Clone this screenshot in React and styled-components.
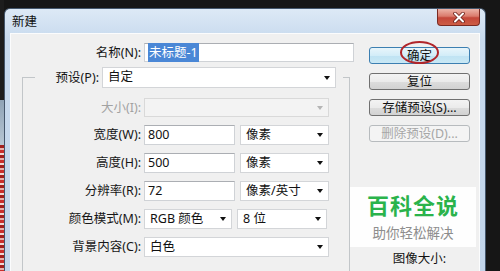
import React from "react";
import styled, { createGlobalStyle } from "styled-components";

const Global = createGlobalStyle`
  html, body { margin: 0; padding: 0; background: #161616; }
  body { font-family: "Noto Sans", "Noto Sans CJK SC", sans-serif; }
  * { box-sizing: border-box; }
`;

const Desktop = styled.div`
  display: flex;
  width: 500px;
  height: 271px;
  overflow: hidden;
  background: #161616;
`;

const Wallpaper = styled.div`
  width: 4px;
  flex: none;
  background:
    linear-gradient(to bottom, #1d1d1d 0, #1d1d1d 100px, #8fa3b6 100px, #b7c6d3 145px, transparent 145px),
    repeating-linear-gradient(to bottom, #c9302c 0 3px, #f0d8d4 3px 5px, #a3201d 5px 8px, #e8b3ad 8px 10px);
`;

const Window = styled.div`
  flex: none;
  width: 482px;
  margin-top: 8px;
  display: flex;
  flex-direction: column;
  border: 1px solid #44566b;
  border-bottom: none;
  border-radius: 6px 6px 0 0;
  background: linear-gradient(to bottom, #dde9f6 0, #c8daee 30px, #c2d5ea 100%);
`;

const TitleBar = styled.div`
  height: 24px;
  flex: none;
  display: flex;
  justify-content: space-between;
  align-items: flex-start;
  padding: 0 5px 0 7px;
`;

const Title = styled.span`
  font-size: 12.5px;
  line-height: 25px;
  color: #111;
`;

const CloseButton = styled.button`
  width: 43px;
  height: 17px;
  padding: 0;
  border: 1px solid #7a2a22;
  border-top: none;
  border-radius: 0 0 4px 4px;
  background: linear-gradient(to bottom, #ecb4a8 0%, #da7b6c 45%, #c4473a 55%, #cd5d45 100%);
  display: flex;
  align-items: center;
  justify-content: center;
`;

const Frame = styled.div`
  flex: 1;
  padding: 0 5px;
  display: flex;
`;

const Panel = styled.div`
  position: relative;
  flex: 1;
  display: flex;
  padding: 9px 0 0 11px;
  background: #f0f0f0;
  border: 1px solid #fbfcfd;
  border-bottom: none;
`;

const LeftCol = styled.div`
  width: 332px;
  flex: none;
  display: flex;
  flex-direction: column;
`;

const Row = styled.div`
  display: flex;
  align-items: center;
  gap: 3px;
  height: ${(p) => p.$h || 20}px;
`;

const Label = styled.span`
  width: ${(p) => p.$w}px;
  flex: none;
  text-align: right;
  font-size: 12.5px;
  line-height: 16px;
  white-space: nowrap;
  color: ${(p) => (p.$disabled ? "#a2a2a2" : "#161616")};
`;

const Controls = styled.div`
  display: flex;
  gap: 5px;
  height: 100%;
`;

const TextBox = styled.div`
  width: ${(p) => p.$w}px;
  height: 100%;
  background: #fff;
  border: 1px solid #cfd2d6;
  border-top-color: #abaeb3;
  padding-left: 3px;
  font-size: 12.5px;
  line-height: 18px;
  color: #111;
  white-space: nowrap;
`;

const Selected = styled.span`
  background: #4a87d6;
  color: #fff;
  padding: 1px 1px;
`;

const Select = styled.div`
  position: relative;
  width: ${(p) => p.$w}px;
  height: 100%;
  background: ${(p) => (p.$disabled ? "#f3f3f3" : "#fff")};
  border: 1px solid ${(p) => (p.$disabled ? "#d9d9d9" : "#d3d5d8")};
  padding-left: 5px;
  font-size: 12.5px;
  line-height: 18px;
  color: #111;
  white-space: nowrap;
  &::after {
    content: "";
    position: absolute;
    right: 5px;
    top: 50%;
    margin-top: -2px;
    border-left: 3.5px solid transparent;
    border-right: 3.5px solid transparent;
    border-top: 4px solid ${(p) => (p.$disabled ? "#b5b5b5" : "#111")};
  }
`;

const GroupBox = styled.fieldset`
  width: 328px;
  margin: 5px 0 0;
  padding: 10px 0 30px 12px;
  min-width: 0;
  border: 1px solid #c2c6c9;
`;

const Legend = styled.legend`
  padding: 0 7px 0 0;
  margin: 0;
`;

const FieldRows = styled.div`
  display: flex;
  flex-direction: column;
  gap: 8px;
`;

const SideCol = styled.div`
  width: 116px;
  flex: none;
  padding-left: 15px;
  display: flex;
  flex-direction: column;
`;

const ButtonStack = styled.div`
  margin-top: 4px;
  display: flex;
  flex-direction: column;
  gap: 9px;
`;

const Button = styled.button`
  position: relative;
  width: 101px;
  height: 17px;
  padding: 0;
  border-radius: 3px;
  font-family: inherit;
  font-size: 12.5px;
  line-height: 15px;
  color: ${(p) => (p.$variant === "disabled" ? "#a6a6a6" : "#111")};
  border: 1px solid
    ${(p) =>
      p.$variant === "default" ? "#3c7fb1" : p.$variant === "disabled" ? "#b7bbbe" : "#707070"};
  background: ${(p) =>
    p.$variant === "default"
      ? "linear-gradient(to bottom, #e8f5fb 0%, #d3edf8 50%, #bfe3f3 51%, #c9e8f5 100%)"
      : p.$variant === "disabled"
      ? "#f4f4f4"
      : "linear-gradient(to bottom, #f3f3f3 0%, #ebebeb 50%, #dddddd 51%, #d2d2d2 100%)"};
`;

const Circle = styled.span`
  position: absolute;
  left: 30px;
  top: -7px;
  width: 39px;
  height: 23px;
  border: 2px solid #b0252a;
  border-radius: 50%;
  pointer-events: none;
`;

const SizeInfo = styled.div`
  margin-top: 109px;
  width: 101px;
  text-align: center;
  font-size: 12.5px;
  line-height: 16px;
  color: #111;
`;

const Watermark = styled.div`
  position: absolute;
  left: 339px;
  top: 153px;
  width: 126px;
  height: 60px;
  background: #fefefe;
  display: flex;
  flex-direction: column;
  align-items: center;
  padding-top: 4px;
`;

const MarkTitle = styled.div`
  font-family: "Noto Sans CJK SC", sans-serif;
  font-size: 22px;
  font-weight: 700;
  line-height: 26px;
  letter-spacing: 1px;
  color: #2ab34b;
`;

const MarkSub = styled.div`
  margin-top: 6px;
  font-family: "Noto Sans CJK SC", sans-serif;
  font-size: 13.5px;
  line-height: 18px;
  color: #8d8d8d;
`;

const CloseIcon = () => (
  <svg width="12" height="11" viewBox="0 0 12 11">
    <path d="M2 1.5 L10 9.5 M10 1.5 L2 9.5" stroke="#6b1f18" strokeWidth="3.6" strokeLinecap="round" />
    <path d="M2 1.5 L10 9.5 M10 1.5 L2 9.5" stroke="#ffffff" strokeWidth="2" strokeLinecap="round" />
  </svg>
);

export default function App() {
  return (
    <>
      <Global />
      <Desktop>
        <Wallpaper />
        <Window>
          <TitleBar>
            <Title>新建</Title>
            <CloseButton aria-label="关闭">
              <CloseIcon />
            </CloseButton>
          </TitleBar>
          <Frame>
            <Panel>
              <LeftCol>
                <Row $h={19}>
                  <Label $w={119}>名称(N):</Label>
                  <TextBox $w={210}>
                    <Selected>未标题-1</Selected>
                  </TextBox>
                </Row>
                <GroupBox>
                  <Legend>
                    <Row $h={21}>
                      <Label $w={64}>预设(P):</Label>
                      <Select $w={234}>自定</Select>
                    </Row>
                  </Legend>
                  <FieldRows>
                    <Row $h={19}>
                      <Label $w={106} $disabled>大小(I):</Label>
                      <Select $w={185} $disabled />
                    </Row>
                    <Row>
                      <Label $w={106}>宽度(W):</Label>
                      <Controls>
                        <TextBox $w={91}>800</TextBox>
                        <Select $w={89}>像素</Select>
                      </Controls>
                    </Row>
                    <Row>
                      <Label $w={106}>高度(H):</Label>
                      <Controls>
                        <TextBox $w={91}>500</TextBox>
                        <Select $w={89}>像素</Select>
                      </Controls>
                    </Row>
                    <Row>
                      <Label $w={106}>分辨率(R):</Label>
                      <Controls>
                        <TextBox $w={91}>72</TextBox>
                        <Select $w={89}>像素/英寸</Select>
                      </Controls>
                    </Row>
                    <Row>
                      <Label $w={106}>颜色模式(M):</Label>
                      <Controls>
                        <Select $w={88}>RGB 颜色</Select>
                        <Select $w={90}>8 位</Select>
                      </Controls>
                    </Row>
                    <Row>
                      <Label $w={106}>背景内容(C):</Label>
                      <Select $w={185}>白色</Select>
                    </Row>
                  </FieldRows>
                </GroupBox>
              </LeftCol>
              <SideCol>
                <ButtonStack>
                  <Button $variant="default">
                    确定
                    <Circle />
                  </Button>
                  <Button>复位</Button>
                  <Button>存储预设(S)...</Button>
                  <Button $variant="disabled" disabled>
                    删除预设(D)...
                  </Button>
                </ButtonStack>
                <SizeInfo>图像大小:</SizeInfo>
              </SideCol>
              <Watermark>
                <MarkTitle>百科全说</MarkTitle>
                <MarkSub>助你轻松解决</MarkSub>
              </Watermark>
            </Panel>
          </Frame>
        </Window>
      </Desktop>
    </>
  );
}
